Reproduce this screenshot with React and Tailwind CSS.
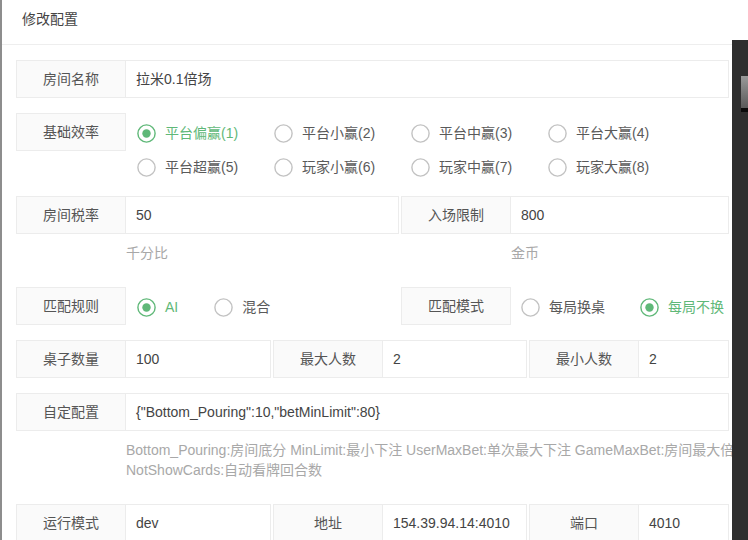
import React from "react";

const font = { fontFamily: '"Liberation Sans", "Noto Sans CJK SC", sans-serif' };

function Radio({ checked, label, className = "" }) {
  return (
    <div className={`flex items-center h-[28px] mt-[6px] ${className}`}>
      <svg width="19" height="19" viewBox="0 0 19 19" className="shrink-0">
        <circle cx="9.5" cy="9.5" r="8.6" fill="white" stroke={checked ? "#5FB878" : "#c2c2c2"} strokeWidth="1.4" />
        {checked && <circle cx="9.5" cy="9.5" r="4.2" fill="#5FB878" />}
      </svg>
      <span className={`ml-[9px] text-[14px] leading-[20px] whitespace-nowrap ${checked ? "text-[#5FB878]" : "text-[#5a5a5a]"}`}>{label}</span>
    </div>
  );
}

function Label({ children, className = "" }) {
  return (
    <div className={`w-[110px] h-[38px] shrink-0 border border-[#ececec] bg-[#fafafa] flex items-center justify-center text-[14px] text-[#555] ${className}`}>
      {children}
    </div>
  );
}

function Value({ children, className = "" }) {
  return (
    <div className={`h-[38px] border border-[#ececec] border-l-0 bg-white flex items-center pl-[10px] text-[14px] text-[#444] whitespace-nowrap overflow-hidden ${className}`}>
      {children}
    </div>
  );
}

export default function App() {
  return (
    <div className="relative w-[748px] h-[540px] overflow-hidden bg-white flex" style={font}>
      <div className="w-[2px] shrink-0 bg-[#8d8d8d]" />
      <div className="w-[730px] shrink-0 overflow-hidden">
        <div className="h-[45px] border-b border-[#eeeeee] pl-[20px] pt-[9px] text-[14px] leading-[20px] text-[#444]">修改配置</div>
        <div className="pl-[14px] pt-[15px] w-[727px]">
          {/* row 1 */}
          <div className="flex mb-[15px]">
            <Label>房间名称</Label>
            <Value className="flex-1">拉米0.1倍场</Value>
          </div>
          {/* row 2 */}
          <div className="flex mb-[15px] h-[68px]">
            <Label>基础效率</Label>
            <div className="pl-[11px] grid grid-cols-[137px_137px_137px_137px]">
              <Radio checked label="平台偏赢(1)" />
              <Radio label="平台小赢(2)" />
              <Radio label="平台中赢(3)" />
              <Radio label="平台大赢(4)" />
              <Radio label="平台超赢(5)" />
              <Radio label="玩家小赢(6)" />
              <Radio label="玩家中赢(7)" />
              <Radio label="玩家大赢(8)" />
            </div>
          </div>
          {/* row 3 */}
          <div className="flex">
            <Label>房间税率</Label>
            <Value className="w-[273px]">50</Value>
            <Label className="ml-[2px]">入场限制</Label>
            <Value className="flex-1">800</Value>
          </div>
          <div className="flex h-[38px] mb-[15px] text-[14px] leading-[20px] text-[#a8a8a8]">
            <div className="w-[110px] shrink-0" />
            <div className="w-[275px] pt-[9px]">千分比</div>
            <div className="w-[110px] shrink-0" />
            <div className="pt-[9px]">金币</div>
          </div>
          {/* row 4 */}
          <div className="flex mb-[15px] h-[38px]">
            <Label>匹配规则</Label>
            <div className="flex w-[275px] pl-[11px]">
              <Radio checked label="AI" className="mr-[36px]" />
              <Radio label="混合" />
            </div>
            <Label>匹配模式</Label>
            <div className="flex pl-[10px]">
              <Radio label="每局换桌" className="mr-[35px]" />
              <Radio checked label="每局不换" />
            </div>
          </div>
          {/* row 5 */}
          <div className="flex mb-[15px]">
            <Label>桌子数量</Label>
            <Value className="w-[145px]">100</Value>
            <Label className="ml-[2px]">最大人数</Label>
            <Value className="w-[144px]">2</Value>
            <Label className="ml-[2px]">最小人数</Label>
            <Value className="flex-1">2</Value>
          </div>
          {/* row 6 */}
          <div className="flex">
            <Label>自定配置</Label>
            <Value className="flex-1">{'{"Bottom_Pouring":10,"betMinLimit":80}'}</Value>
          </div>
          <div className="flex mb-[15px] py-[9px] text-[14px] leading-[20px] text-[#a8a8a8]">
            <div className="w-[110px] shrink-0" />
            <div className="whitespace-nowrap">
              <div>Bottom_Pouring:房间底分 MinLimit:最小下注 UserMaxBet:单次最大下注 GameMaxBet:房间最大倍数</div>
              <div>NotShowCards:自动看牌回合数</div>
            </div>
          </div>
          {/* row 7 */}
          <div className="flex">
            <Label>运行模式</Label>
            <Value className="w-[145px]">dev</Value>
            <Label className="ml-[2px]">地址</Label>
            <Value className="w-[144px]">154.39.94.14:4010</Value>
            <Label className="ml-[2px]">端口</Label>
            <Value className="flex-1">4010</Value>
          </div>
        </div>
      </div>
      {/* overlay dark window at right edge */}
      <div className="absolute left-[732px] top-[40px] bottom-0 right-0 bg-[#2e2e2e]">
        <div className="absolute left-[9px] top-[36px] w-[8px] h-[32px] bg-gradient-to-b from-[#9a9a9a] to-[#5a5a5a]" />
        <div className="absolute left-[9px] top-[68px] w-[8px] h-[4px] bg-[#0a0a0a]" />
      </div>
    </div>
  );
}
